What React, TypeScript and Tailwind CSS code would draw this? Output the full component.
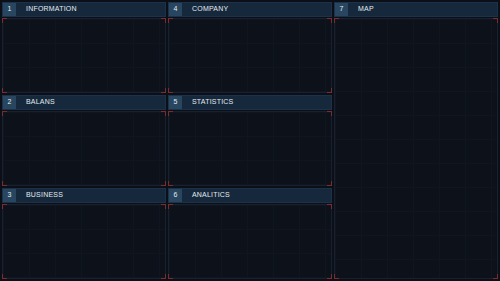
const panels = [
  { n: 1, title: "INFORMATION", cls: "col-start-1 row-start-1" },
  { n: 2, title: "BALANS", cls: "col-start-1 row-start-2" },
  { n: 3, title: "BUSINESS", cls: "col-start-1 row-start-3" },
  { n: 4, title: "COMPANY", cls: "col-start-2 row-start-1" },
  { n: 5, title: "STATISTICS", cls: "col-start-2 row-start-2" },
  { n: 6, title: "ANALITICS", cls: "col-start-2 row-start-3" },
  { n: 7, title: "MAP", cls: "col-start-3 row-start-1 row-span-3" },
];

function Corner({ pos }: { pos: string }) {
  return <span className={`absolute w-[5px] h-[5px] border-[#7a2c2e] ${pos}`} />;
}

function Panel({ n, title, cls }: { n: number; title: string; cls: string }) {
  return (
    <div className={`flex flex-col min-h-0 ${cls}`}>
      {/* header */}
      <div className="h-[15px] flex items-center bg-[#16293c] border border-[#1d3248]">
        <div className="w-[13px] h-full flex items-center justify-center bg-[#28465f] text-[7px] text-[#e4ecf3]">
          {n}
        </div>
        <span className="ml-[10px] text-[7px] text-[#e4eaf0] tracking-[0.2px]">{title}</span>
      </div>
      {/* body */}
      <div className="relative flex-1 mt-[1px] border border-[#19212e] bg-[#0d111a] bg-[linear-gradient(#10161f_1px,transparent_1px),linear-gradient(90deg,#10161f_1px,transparent_1px)] bg-[size:26px_24px]">
        <Corner pos="-top-px -left-px border-t border-l" />
        <Corner pos="-top-px -right-px border-t border-r" />
        <Corner pos="-bottom-px -left-px border-b border-l" />
        <Corner pos="-bottom-px -right-px border-b border-r" />
      </div>
    </div>
  );
}

export default function App() {
  return (
    <div
      className="w-[500px] h-[281px] bg-[#0b0f17] p-[2px] grid grid-cols-3 grid-rows-3 gap-[2px]"
      style={{ fontFamily: '"Liberation Sans", Arial, sans-serif' }}
    >
      {panels.map(p => (
        <Panel key={p.n} {...p} />
      ))}
    </div>
  );
}
